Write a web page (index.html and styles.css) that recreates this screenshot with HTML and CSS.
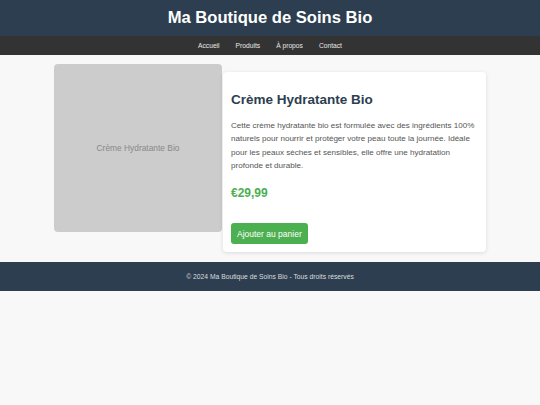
FILE: index.html
```html
<!DOCTYPE html>
<html lang="fr">
<head>
<meta charset="utf-8">
<title>Ma Boutique de Soins Bio</title>
<link rel="stylesheet" href="styles.css">
</head>
<body>
<header class="site-header">
  <h1 class="site-title">Ma Boutique de Soins Bio</h1>
</header>
<nav class="site-nav">
  <a href="#">Accueil</a>
  <a href="#">Produits</a>
  <a href="#">À propos</a>
  <a href="#">Contact</a>
</nav>
<main class="main">
  <div class="product">
    <div class="product-image">Crème Hydratante Bio</div>
    <div class="product-card">
      <h2 class="product-name">Crème Hydratante Bio</h2>
      <p class="product-desc">Cette crème hydratante bio est formulée avec des ingrédients 100% naturels pour nourrir et protéger votre peau toute la journée. Idéale pour les peaux sèches et sensibles, elle offre une hydratation profonde et durable.</p>
      <p class="product-price">€29,99</p>
      <button class="btn-cart">Ajouter au panier</button>
    </div>
  </div>
</main>
<footer class="site-footer">
  <p>© 2024 Ma Boutique de Soins Bio - Tous droits réservés</p>
</footer>
</body>
</html>
```
FILE: styles.css
```css
* { box-sizing: border-box; }
html, body {
  margin: 0;
  padding: 0;
  background: #f8f8f8;
  font-family: "Liberation Sans", Arial, sans-serif;
}
.site-header {
  background: #2c3e50;
  height: 36px;
  display: flex;
  align-items: center;
  justify-content: center;
}
.site-title {
  margin: 0;
  color: #fff;
  font-size: 16.6px;
  font-weight: bold;
  line-height: 20px;
}
.site-nav {
  background: #333;
  height: 19px;
  display: flex;
  align-items: center;
  justify-content: center;
  gap: 16px;
}
.site-nav a {
  color: #e8e8e8;
  text-decoration: none;
  font-size: 6.7px;
  line-height: 10px;
}
.main {
  padding: 9px 0 10px;
}
.product {
  width: 432px;
  margin: 0 auto;
  display: flex;
  align-items: flex-start;
}
.product-image {
  flex: 0 0 168px;
  height: 168px;
  background: #cccccc;
  border-radius: 4px;
  display: flex;
  align-items: center;
  justify-content: center;
  color: #888;
  font-size: 8.4px;
}
.product-card {
  flex: 1;
  margin: 8px 0 0 1px;
  height: 180px;
  background: #fff;
  border-radius: 4px;
  box-shadow: 0 1px 4px rgba(0,0,0,0.12);
  padding: 8px 8px;
}
.product-name {
  margin: 12px 0 0;
  font-size: 13.5px;
  line-height: 16px;
  color: #2c3e50;
  font-weight: bold;
}
.product-desc {
  margin: 11px 0 0;
  font-size: 8.08px;
  line-height: 13.33px;
  color: #555;
}
.product-price {
  margin: 14px 0 0;
  font-size: 12px;
  line-height: 14px;
  font-weight: bold;
  color: #4caf50;
}
.btn-cart {
  margin-top: 23px;
  height: 21px;
  padding: 0 6px;
  background: #4caf50;
  border: none;
  border-radius: 3px;
  color: #fff;
  font-family: "Liberation Sans", Arial, sans-serif;
  font-size: 8.5px;
}
.site-footer {
  background: #2c3e50;
  height: 29px;
  display: flex;
  align-items: center;
  justify-content: center;
}
.site-footer p {
  margin: 0;
  color: #ddd;
  font-size: 6.75px;
}
```
